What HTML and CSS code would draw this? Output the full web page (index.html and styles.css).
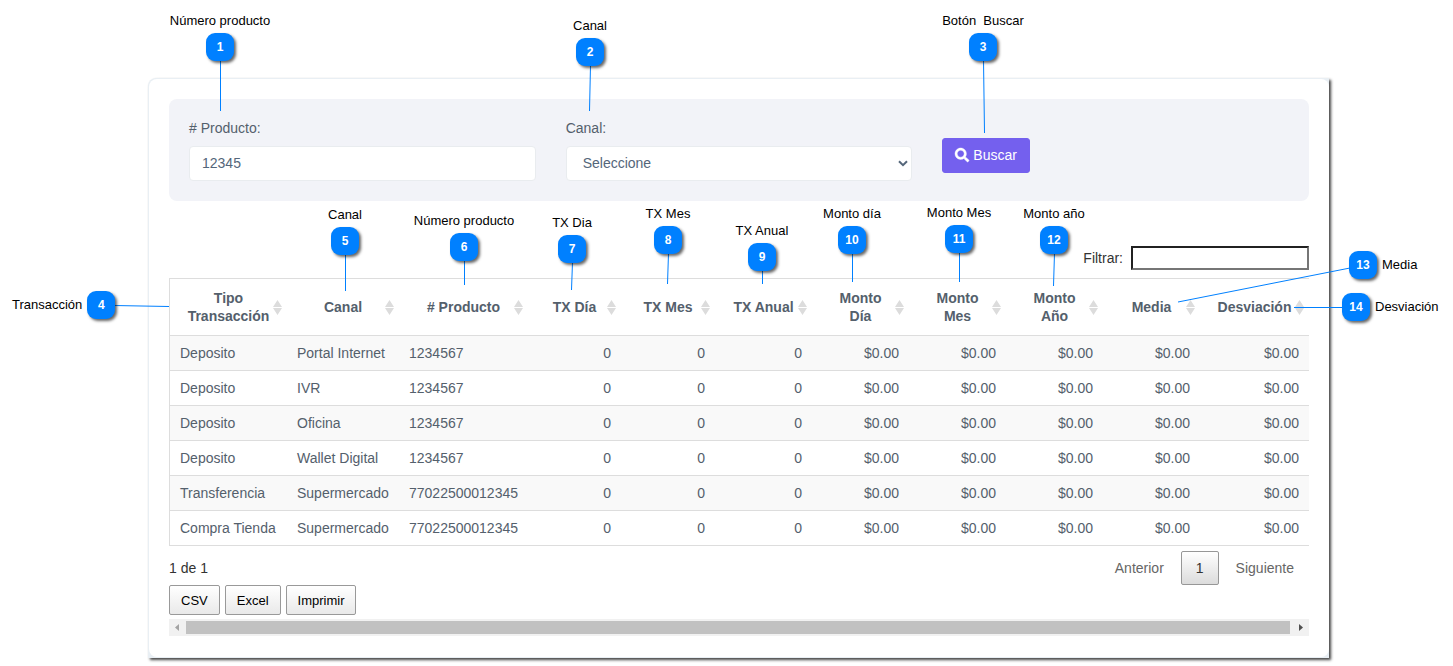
FILE: index.html
```html
<!DOCTYPE html>
<html lang="es">
<head>
  <meta charset="UTF-8">
  <meta name="viewport" content="width=device-width, initial-scale=1.0">
  <title>Consulta de transacciones</title>
  <link rel="stylesheet" href="styles.css">
</head>
<body>

  <main class="card">
    <div class="card-body">

      <form class="search-form">
        <div class="form-group">
          <label for="producto"># Producto:</label>
          <input type="text" class="form-control" id="producto" value="12345">
        </div>
        <div class="form-group">
          <label for="canal">Canal:</label>
          <div class="select-box">
            <select class="form-control" id="canal">
              <option>Seleccione</option>
            </select>
            <svg class="chevron" viewBox="0 0 10 7"><path d="M1 1.2L5 5.2L9 1.2" fill="none" stroke="#54667a" stroke-width="2"/></svg>
          </div>
        </div>
        <div class="form-action">
          <button type="button" class="search-btn">
            <svg class="search-icon" viewBox="0 0 512 512"><path fill="#fff" stroke="#fff" stroke-width="16" d="M505 442.7L405.300 343c-4.500-4.500-10.600-7-17-7H372c27.600-35.300 44-79.700 44-128C416 93.100 322.900 0 208 0S0 93.100 0 208s93.100 208 208 208c48.300 0 92.700-16.400 128-44v16.300c0 6.400 2.500 12.500 7 17l99.700 99.700c9.400 9.400 24.600 9.400 33.900 0l28.300-28.300c9.400-9.400 9.400-24.600.1-34zM208 336c-70.700 0-128-57.200-128-128 0-70.700 57.200-128 128-128 70.700 0 128 57.200 128 128 0 70.700-57.200 128-128 128z"/></svg>
            Buscar
          </button>
        </div>
      </form>

      <div class="filter">
        <label for="filtrar">Filtrar:</label>
        <input type="search" id="filtrar">
      </div>

      <table class="data-table">
        <colgroup>
          <col class="col-tipo">
          <col class="col-canal">
          <col class="col-producto">
          <col class="col-dia">
          <col class="col-mes">
          <col class="col-monto">
          <col class="col-monto">
          <col class="col-monto">
          <col class="col-monto">
          <col class="col-monto">
          <col class="col-desviacion">
        </colgroup>
        <thead>
          <tr>
            <th>Tipo Transacción</th>
            <th>Canal</th>
            <th># Producto</th>
            <th>TX Día</th>
            <th>TX Mes</th>
            <th>TX Anual</th>
            <th>Monto<br>Día</th>
            <th>Monto<br>Mes</th>
            <th>Monto<br>Año</th>
            <th>Media</th>
            <th>Desviación</th>
          </tr>
        </thead>
        <tbody>
          <tr><td>Deposito</td><td>Portal Internet</td><td>1234567</td><td class="num">0</td><td class="num">0</td><td class="num">0</td><td class="num">$0.00</td><td class="num">$0.00</td><td class="num">$0.00</td><td class="num">$0.00</td><td class="num">$0.00</td></tr>
          <tr><td>Deposito</td><td>IVR</td><td>1234567</td><td class="num">0</td><td class="num">0</td><td class="num">0</td><td class="num">$0.00</td><td class="num">$0.00</td><td class="num">$0.00</td><td class="num">$0.00</td><td class="num">$0.00</td></tr>
          <tr><td>Deposito</td><td>Oficina</td><td>1234567</td><td class="num">0</td><td class="num">0</td><td class="num">0</td><td class="num">$0.00</td><td class="num">$0.00</td><td class="num">$0.00</td><td class="num">$0.00</td><td class="num">$0.00</td></tr>
          <tr><td>Deposito</td><td>Wallet Digital</td><td>1234567</td><td class="num">0</td><td class="num">0</td><td class="num">0</td><td class="num">$0.00</td><td class="num">$0.00</td><td class="num">$0.00</td><td class="num">$0.00</td><td class="num">$0.00</td></tr>
          <tr><td>Transferencia</td><td>Supermercado</td><td>77022500012345</td><td class="num">0</td><td class="num">0</td><td class="num">0</td><td class="num">$0.00</td><td class="num">$0.00</td><td class="num">$0.00</td><td class="num">$0.00</td><td class="num">$0.00</td></tr>
          <tr><td>Compra Tienda</td><td>Supermercado</td><td>77022500012345</td><td class="num">0</td><td class="num">0</td><td class="num">0</td><td class="num">$0.00</td><td class="num">$0.00</td><td class="num">$0.00</td><td class="num">$0.00</td><td class="num">$0.00</td></tr>
        </tbody>
      </table>

      <div class="table-footer">
        <span class="info">1 de 1</span>
        <div class="pagination">
          <button type="button" class="page-btn">Anterior</button>
          <button type="button" class="page-btn current">1</button>
          <button type="button" class="page-btn">Siguiente</button>
        </div>
      </div>

      <div class="export-buttons">
        <button type="button" class="export-btn">CSV</button>
        <button type="button" class="export-btn">Excel</button>
        <button type="button" class="export-btn">Imprimir</button>
      </div>

      <div class="scrollbar">
        <svg class="scroll-arrow" viewBox="0 0 17 17"><path d="M10 5v7L6 8.500z" fill="#a3a3a3"/></svg>
        <div class="scroll-thumb"></div>
        <svg class="scroll-arrow" viewBox="0 0 17 17"><path d="M7 5v7l4-3.500z" fill="#505050"/></svg>
      </div>

    </div>
  </main>

  <!-- Callout lines -->
  <svg class="lines" width="1453" height="666" viewBox="0 0 1453 666">
    <g stroke="#0080ff" stroke-width="1">
      <line x1="220.500" y1="60" x2="220.500" y2="111"/>
      <line x1="590.500" y1="65" x2="589.500" y2="111"/>
      <line x1="983.500" y1="60" x2="984.500" y2="133"/>
      <line x1="114" y1="305.500" x2="169" y2="306.500"/>
      <line x1="345.500" y1="254" x2="345.500" y2="291"/>
      <line x1="464.500" y1="260" x2="464.500" y2="285"/>
      <line x1="572.500" y1="262" x2="571.500" y2="290"/>
      <line x1="668.500" y1="253" x2="667.500" y2="284"/>
      <line x1="762.500" y1="270" x2="762.500" y2="284"/>
      <line x1="852.500" y1="253" x2="852.500" y2="282"/>
      <line x1="959.500" y1="252" x2="959.500" y2="282"/>
      <line x1="1054.500" y1="253" x2="1053.500" y2="286"/>
      <line x1="1350" y1="268" x2="1178" y2="302"/>
      <line x1="1343" y1="307.500" x2="1294" y2="307.500"/>
    </g>
  </svg>

  <!-- Callouts -->
  <div class="note note-1"><span>Número producto</span><b class="badge">1</b></div>
  <div class="note note-2"><span>Canal</span><b class="badge">2</b></div>
  <div class="note note-3"><span>Botón&nbsp; Buscar</span><b class="badge">3</b></div>
  <div class="note side note-4"><span>Transacción</span><b class="badge">4</b></div>
  <div class="note note-5"><span>Canal</span><b class="badge">5</b></div>
  <div class="note note-6"><span>Número producto</span><b class="badge">6</b></div>
  <div class="note note-7"><span>TX Dia</span><b class="badge">7</b></div>
  <div class="note note-8"><span>TX Mes</span><b class="badge">8</b></div>
  <div class="note note-9"><span>TX Anual</span><b class="badge">9</b></div>
  <div class="note note-10"><span>Monto día</span><b class="badge">10</b></div>
  <div class="note note-11"><span>Monto Mes</span><b class="badge">11</b></div>
  <div class="note note-12"><span>Monto año</span><b class="badge">12</b></div>
  <div class="note side note-13"><b class="badge">13</b><span>Media</span></div>
  <div class="note side note-14"><b class="badge">14</b><span>Desviación</span></div>

</body>
</html>
```

FILE: styles.css
```css
/* Reset default styles */
* {
  margin: 0;
  padding: 0;
  box-sizing: border-box;
}

body {
  min-height: 100vh;
  padding: 78px 124px 8px 148px;
  font-family: "Liberation Sans", Arial, sans-serif;
  font-size: 14px;
  line-height: 18px;
  color: #54606c;
  background: #fff;
}

button,
input,
select {
  font-family: inherit;
  font-size: 14px;
}

/* Card */
.card {
  padding: 1px 0 1px 1px;
  background: #e9eff4;
  border-top-left-radius: 8px;
  box-shadow: 2px 2px 3px #444;
}

.card-body {
  padding: 20px 20px 21px;
  background: #fff;
  border-radius: 8px;
}

/* Search Form */
.search-form {
  display: grid;
  grid-template-columns: repeat(3, 1fr);
  gap: 30px;
  padding: 20px;
  background: #f2f3f8;
  border-radius: 8px;
}

.form-group label {
  display: block;
  margin-bottom: 9px;
}

.form-control {
  display: block;
  width: 100%;
  height: 35px;
  padding: 0 12px 1px;
  color: #54667a;
  background: #fff;
  border: 1px solid #e9ecef;
  border-radius: 4px;
}

.select-box {
  position: relative;
}

.select-box .form-control {
  padding: 0 16px 1px;
  appearance: none;
}

.chevron {
  position: absolute;
  top: 14px;
  right: 4px;
  width: 10px;
  height: 7px;
  pointer-events: none;
}

.form-action {
  padding-top: 19px;
}

.search-btn {
  display: flex;
  align-items: center;
  gap: 4px;
  height: 35px;
  padding: 0 12px 2px;
  color: #fff;
  background: #7460ee;
  border: 1px solid #7460ee;
  border-radius: 3px;
  cursor: pointer;
}

.search-icon {
  width: 14px;
  height: 14px;
  overflow: visible;
}

/* Table Filter */
.filter {
  display: flex;
  justify-content: flex-end;
  align-items: center;
  gap: 8px;
  margin: 45px 0 8px;
  color: #333;
}

.filter input {
  width: 178px;
  height: 24px;
  border: 2px inset #767676;
}

/* Table */
.data-table {
  width: 100%;
  table-layout: fixed;
  border-collapse: separate;
  border-spacing: 0;
  border-top: 1px solid #ddd;
  border-left: 1px solid #ddd;
}

.col-tipo { width: 117px; }
.col-canal { width: 112px; }
.col-producto { width: 129px; }
.col-dia { width: 93px; }
.col-mes { width: 94px; }
.col-monto { width: 97px; }
.col-desviacion { width: 109px; }

.data-table th {
  padding: 10px 16px;
  border-bottom: 1px solid #ddd;
  background: url("data:image/svg+xml,%3Csvg xmlns='http://www.w3.org/2000/svg' width='9' height='15'%3E%3Cpath d='M4.500 0L9 7H0zM0 8h9l-4.500 7z' fill='%23dcdcdc'/%3E%3C/svg%3E") no-repeat right 5px center;
  white-space: nowrap;
}

.data-table th:first-child {
  white-space: normal;
}

.data-table td {
  padding: 8px 10px;
  border-bottom: 1px solid #ddd;
  white-space: nowrap;
}

.data-table tbody tr:nth-child(odd) {
  background: #f9f9f9;
}

.data-table .num {
  text-align: right;
}

/* Info and Pagination */
.table-footer {
  display: flex;
  justify-content: space-between;
  align-items: center;
  padding-top: 5px;
}

.info {
  color: #333;
}

.pagination {
  display: flex;
  gap: 2px;
}

.page-btn {
  height: 34px;
  padding: 0 14px;
  color: #666;
  background: transparent;
  border: 1px solid transparent;
  border-radius: 2px;
}

.page-btn.current {
  color: #333;
  background: linear-gradient(to bottom, #fff, #dcdcdc);
  border-color: #979797;
}

/* Export Buttons */
.export-buttons {
  display: flex;
  gap: 5px;
  margin-bottom: 4px;
}

.export-btn {
  height: 30px;
  padding: 0 11px;
  font-size: 13px;
  color: #000;
  background: linear-gradient(to bottom, #fff, #e9e9e9);
  border: 1px solid #999;
  border-radius: 2px;
}

/* Horizontal Scrollbar */
.scrollbar {
  display: flex;
  align-items: center;
  height: 17px;
  background: #f1f1f1;
}

.scroll-arrow {
  width: 17px;
  height: 17px;
}

.scroll-thumb {
  flex: 1;
  height: 13px;
  margin-right: 2px;
  background: #c1c1c1;
}

/* Callouts */
.lines {
  position: absolute;
  top: 0;
  left: 0;
  pointer-events: none;
}

.note {
  position: absolute;
  display: flex;
  flex-direction: column;
  align-items: center;
  gap: 3px;
  width: 120px;
  font-size: 13px;
  line-height: 18px;
  color: #000;
}

.note.side {
  flex-direction: row;
  gap: 5px;
  width: auto;
}

.badge {
  width: 28px;
  height: 28px;
  font-size: 12px;
  line-height: 28px;
  text-align: center;
  color: #fff;
  background: #0080ff;
  border-radius: 9px;
  box-shadow: 2px 2px 3px rgba(0, 0, 0, 0.6);
}

.note-1 { left: 160px; top: 12px; }
.note-2 { left: 530px; top: 17px; }
.note-3 { left: 923px; top: 12px; }
.note-4 { left: 12px; top: 291px; }
.note-5 { left: 285px; top: 206px; }
.note-6 { left: 404px; top: 212px; }
.note-7 { left: 512px; top: 214px; }
.note-8 { left: 608px; top: 205px; }
.note-9 { left: 702px; top: 222px; }
.note-10 { left: 792px; top: 205px; }
.note-11 { left: 899px; top: 204px; }
.note-12 { left: 994px; top: 205px; }
.note-13 { left: 1349px; top: 251px; }
.note-14 { left: 1342px; top: 293px; }
```
